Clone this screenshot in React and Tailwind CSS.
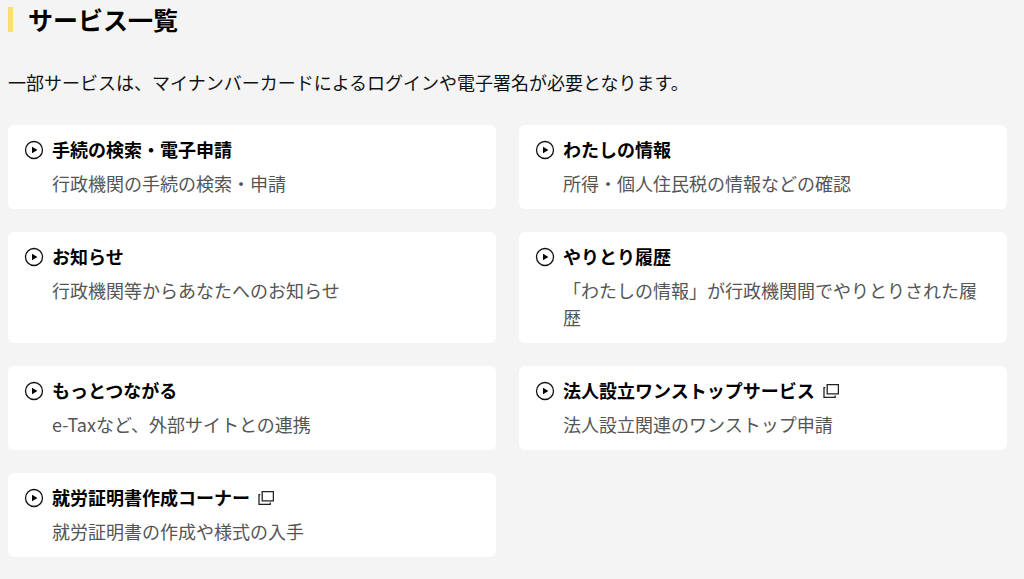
const services = [
  { name: "手続の検索・電子申請", description: "行政機関の手続の検索・申請" },
  { name: "わたしの情報", description: "所得・個人住民税の情報などの確認" },
  { name: "お知らせ", description: "行政機関等からあなたへのお知らせ" },
  { name: "やりとり履歴", description: "「わたしの情報」が行政機関間でやりとりされた履歴" },
  { name: "もっとつながる", description: "e-Taxなど、外部サイトとの連携" },
  { name: "法人設立ワンストップサービス", description: "法人設立関連のワンストップ申請", external: true },
  { name: "就労証明書作成コーナー", description: "就労証明書の作成や様式の入手", external: true },
]

const PlayIcon = () => (
  <svg className="mt-1 h-5 w-5 shrink-0" viewBox="0 0 20 20" fill="none" aria-hidden="true">
    <circle cx="10" cy="10" r="8.5" stroke="#111" strokeWidth="1.3" />
    <path d="M8 6.7v6.6l5.4-3.3z" fill="#000" />
  </svg>
)

const ExternalIcon = () => (
  <svg className="ml-2 h-4 w-4 shrink-0" viewBox="0 0 16 16" fill="none" stroke="#222" strokeWidth="1.3" aria-hidden="true">
    <path d="M4.2 1.6h11.2v9.2H4.2z" />
    <path d="M2.3 4.6H1v9.8h11.2v-1.8" />
  </svg>
)

const ServiceCard = ({ service }) => (
  <a href="#" className="flex h-full gap-2 rounded-md bg-white px-4 pt-[11px] pb-3">
    <PlayIcon />
    <div className="min-w-0 flex-1">
      <h3 className="flex items-center text-lg leading-[27px] font-bold text-black">
        {service.name}
        {service.external && <ExternalIcon />}
      </h3>
      <p className="mt-[7px] text-lg leading-[27px] text-[#555]">{service.description}</p>
    </div>
  </a>
)

const App = () => {
  return (
    <main lang="ja" className="min-h-screen bg-[#f4f4f4] pt-[7px] pr-[17px] pb-5 pl-2 font-['Noto_Sans_CJK_JP',sans-serif]">
      {/* Section heading */}
      <h2 className="border-l-[5px] border-[#fcdf71] pl-[15px] text-[25px] leading-[25px] font-bold text-black">
        サービス一覧
      </h2>
      <p className="mt-[37px] text-lg leading-[27px] text-[#111]">
        一部サービスは、マイナンバーカードによるログインや電子署名が必要となります。
      </p>

      {/* Service list */}
      <ul className="mt-[29px] grid grid-cols-2 gap-[23px]">
        {services.map((service) => (
          <li key={service.name}>
            <ServiceCard service={service} />
          </li>
        ))}
      </ul>
    </main>
  )
}

export default App
